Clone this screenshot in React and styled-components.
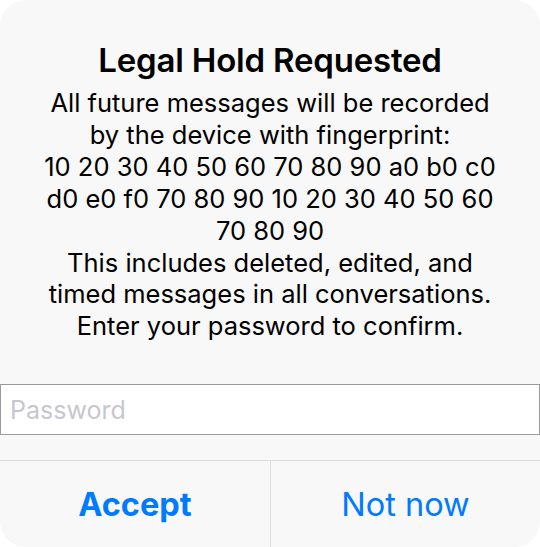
import React from "react";
import styled, { createGlobalStyle } from "styled-components";

const GlobalStyle = createGlobalStyle`
  html, body {
    margin: 0;
    padding: 0;
    background: #ffffff;
  }
  body {
    font-family: Inter, "Noto Sans", "Liberation Sans", sans-serif;
    -webkit-font-smoothing: antialiased;
  }
`;

const Alert = styled.div`
  width: 540px;
  height: 547px;
  background-color: #f8f8f8;
  border-radius: 26px;
  overflow: hidden;
  display: flex;
  flex-direction: column;
`;

const Content = styled.div`
  padding: 41px 0 0;
  display: flex;
  flex-direction: column;
  align-items: center;
  text-align: center;
`;

const Title = styled.h2`
  margin: 0;
  font-size: 33px;
  line-height: 38px;
  font-weight: 600;
  color: #000;
  letter-spacing: -0.2px;
`;

const Message = styled.div`
  margin-top: 8px;
  font-size: 25.5px;
  line-height: 31.9px;
  font-weight: 400;
  color: #000;
  white-space: nowrap;
`;

const Line = styled.div``;

const PasswordInput = styled.input`
  box-sizing: border-box;
  margin-top: 42px;
  width: 100%;
  height: 51px;
  border: 1px solid #9b9b9b;
  background: #ffffff;
  padding: 0 9px;
  font-family: inherit;
  font-size: 25px;
  color: #000;
  outline: none;

  &::placeholder {
    color: #c7c7cd;
  }
`;

const Actions = styled.div`
  margin-top: auto;
  height: 86px;
  border-top: 1px solid #dcdcdc;
  display: grid;
  grid-template-columns: 270px 1fr;
`;

const ActionButton = styled.button`
  border: none;
  background: transparent;
  font-family: inherit;
  font-size: 32.5px;
  font-weight: ${({ $primary }) => ($primary ? 700 : 400)};
  color: #007aff;
  padding: 0;
  cursor: pointer;

  & + & {
    border-left: 1px solid #dcdcdc;
  }
`;

const messageLines = [
  "All future messages will be recorded",
  "by the device with fingerprint:",
  "10 20 30 40 50 60 70 80 90 a0 b0 c0",
  "d0 e0 f0 70 80 90 10 20 30 40 50 60",
  "70 80 90",
  "This includes deleted, edited, and",
  "timed messages in all conversations.",
  "Enter your password to confirm.",
];

export default function App() {
  return (
    <>
      <GlobalStyle />
      <Alert>
        <Content>
          <Title>Legal Hold Requested</Title>
          <Message>
            {messageLines.map((line, i) => (
              <Line key={i}>{line}</Line>
            ))}
          </Message>
        </Content>
        <PasswordInput type="password" placeholder="Password" />
        <Actions>
          <ActionButton $primary>Accept</ActionButton>
          <ActionButton>Not now</ActionButton>
        </Actions>
      </Alert>
    </>
  );
}
